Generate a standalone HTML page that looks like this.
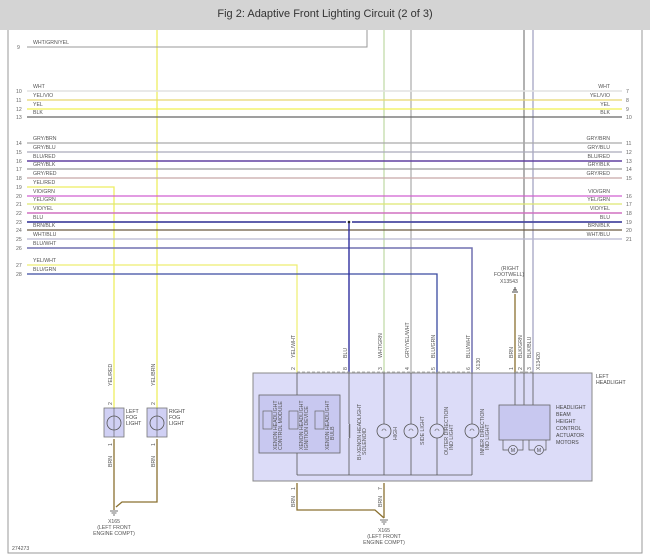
<!DOCTYPE html>
<html><head><meta charset="utf-8"><style>
html,body{margin:0;padding:0;background:#fff;}
svg{display:block;font-family:"Liberation Sans",sans-serif;}
.t{font-size:5.2px;fill:#555;}
.n{font-size:5.2px;fill:#666;}
.l{font-size:5.2px;fill:#444;}
</style></head><body>
<svg width="650" height="559" viewBox="0 0 650 559" xmlns="http://www.w3.org/2000/svg">
<rect width="650" height="559" fill="#fff"/>
<rect x="0" y="0" width="650" height="30" fill="#d4d4d4"/>
<text x="325" y="17" font-size="11" fill="#333" text-anchor="middle">Fig 2: Adaptive Front Lighting Circuit (2 of 3)</text>
<!-- frame -->
<polyline points="8,30 8,553 642,553 642,30" fill="none" stroke="#999" stroke-width="1"/>

<!-- verticals from top -->
<line x1="157" y1="30" x2="157" y2="408" stroke="#eeee60" stroke-width="1.3"/>
<line x1="384" y1="30" x2="384" y2="373" stroke="#b0d090" stroke-width="1"/>
<line x1="411" y1="30" x2="411" y2="373" stroke="#999" stroke-width="1"/>
<line x1="524" y1="30" x2="524" y2="373" stroke="#666" stroke-width="1"/>
<line x1="533" y1="30" x2="533" y2="373" stroke="#8888b0" stroke-width="1"/>

<!-- row 9 -->
<polyline points="27,47 367,47 367,30" fill="none" stroke="#999" stroke-width="1"/>
<text class="t" x="33" y="44">WHT/GRN/YEL</text><text class="n" x="17" y="49">9</text>

<!-- full rows -->
<g stroke-width="1.2" fill="none">
<line x1="27" y1="91" x2="622" y2="91" stroke="#e2e2e2" stroke-width="1.5"/>
<line x1="27" y1="100" x2="622" y2="100" stroke="#e8d870"/>
<line x1="27" y1="109" x2="622" y2="109" stroke="#f0f050"/>
<line x1="27" y1="117" x2="622" y2="117" stroke="#666"/>
<line x1="27" y1="143" x2="622" y2="143" stroke="#aaa"/>
<line x1="27" y1="152" x2="622" y2="152" stroke="#aab"/>
<line x1="27" y1="161" x2="622" y2="161" stroke="#6040a0" stroke-width="1.5"/>
<line x1="27" y1="169" x2="622" y2="169" stroke="#9a9a9a"/>
<line x1="27" y1="178" x2="622" y2="178" stroke="#c8a8a8"/>
<polyline points="27,187 114,187 114,408" stroke="#eeee60" stroke-width="1.3"/>
<line x1="27" y1="196" x2="622" y2="196" stroke="#d060d0"/>
<line x1="27" y1="204" x2="622" y2="204" stroke="#dde870"/>
<line x1="27" y1="213" x2="622" y2="213" stroke="#d070c0" stroke-width="1.4"/>
<line x1="27" y1="222" x2="346" y2="222" stroke="#4a4aa0" stroke-width="1.8"/>
<line x1="352" y1="222" x2="622" y2="222" stroke="#4a4aa0" stroke-width="1.8"/>
<line x1="27" y1="230" x2="622" y2="230" stroke="#6a5a40"/>
<line x1="27" y1="239" x2="622" y2="239" stroke="#b8b8d0"/>
<polyline points="27,248 472,248 472,373" stroke="#7070b0" stroke-width="1.5"/>
<polyline points="27,265 297,265 297,373" stroke="#eeee70"/>
<polyline points="27,274 437,274 437,373" stroke="#3a4aa0" stroke-width="1.3"/>
<line x1="349" y1="222" x2="349" y2="373" stroke="#3030a0" stroke-width="1.4"/>
</g>
<circle cx="349" cy="222" r="1.3" fill="#222"/>

<!-- left labels -->
<g class="t">
<text x="33" y="88">WHT</text><text x="33" y="97">YEL/VIO</text><text x="33" y="106">YEL</text><text x="33" y="114">BLK</text>
<text x="33" y="140">GRY/BRN</text><text x="33" y="149">GRY/BLU</text><text x="33" y="158">BLU/RED</text><text x="33" y="166">GRY/BLK</text><text x="33" y="175">GRY/RED</text><text x="33" y="184">YEL/RED</text><text x="33" y="193">VIO/GRN</text><text x="33" y="201">YEL/GRN</text><text x="33" y="210">VIO/YEL</text><text x="33" y="219">BLU</text><text x="33" y="227">BRN/BLK</text><text x="33" y="236">WHT/BLU</text><text x="33" y="245">BLU/WHT</text><text x="33" y="262">YEL/WHT</text><text x="33" y="271">BLU/GRN</text>
</g>
<g class="n">
<text x="16" y="93">10</text><text x="16" y="102">11</text><text x="16" y="111">12</text><text x="16" y="119">13</text>
<text x="16" y="145">14</text><text x="16" y="154">15</text><text x="16" y="163">16</text><text x="16" y="171">17</text><text x="16" y="180">18</text><text x="16" y="189">19</text><text x="16" y="198">20</text><text x="16" y="206">21</text><text x="16" y="215">22</text><text x="16" y="224">23</text><text x="16" y="232">24</text><text x="16" y="241">25</text><text x="16" y="250">26</text><text x="16" y="267">27</text><text x="16" y="276">28</text>
</g>
<!-- right labels -->
<g class="t" text-anchor="end">
<text x="610" y="88">WHT</text><text x="610" y="97">YEL/VIO</text><text x="610" y="106">YEL</text><text x="610" y="114">BLK</text>
<text x="610" y="140">GRY/BRN</text><text x="610" y="149">GRY/BLU</text><text x="610" y="158">BLU/RED</text><text x="610" y="166">GRY/BLK</text><text x="610" y="175">GRY/RED</text>
<text x="610" y="193">VIO/GRN</text><text x="610" y="201">YEL/GRN</text><text x="610" y="210">VIO/YEL</text><text x="610" y="219">BLU</text><text x="610" y="227">BRN/BLK</text><text x="610" y="236">WHT/BLU</text>
</g>
<g class="n">
<text x="626" y="93">7</text><text x="626" y="102">8</text><text x="626" y="111">9</text><text x="626" y="119">10</text>
<text x="626" y="145">11</text><text x="626" y="154">12</text><text x="626" y="163">13</text><text x="626" y="171">14</text><text x="626" y="180">15</text>
<text x="626" y="198">16</text><text x="626" y="206">17</text><text x="626" y="215">18</text><text x="626" y="224">19</text><text x="626" y="232">20</text><text x="626" y="241">21</text>
</g>

<!-- footwell -->
<g class="t" text-anchor="middle"><text x="510" y="270">(RIGHT</text><text x="509" y="276">FOOTWELL)</text><text x="509" y="283">X13543</text></g>
<path d="M512,292 L518,292 M513,290 L517,290 M515,287 L515,290" stroke="#444" stroke-width="1"/>
<line x1="515" y1="294" x2="515" y2="373" stroke="#8a7030" stroke-width="1.3"/>

<!-- headlight box -->
<rect x="253" y="373" width="339" height="108" fill="#dcdcf8" stroke="#888" stroke-width="1"/>
<line x1="297" y1="372" x2="472" y2="372" stroke="#999" stroke-dasharray="3,2" stroke-width="0.8"/>
<line x1="515" y1="372" x2="533" y2="372" stroke="#999" stroke-dasharray="3,2" stroke-width="0.8"/>
<g class="l"><text x="596" y="378">LEFT</text><text x="596" y="384">HEADLIGHT</text></g>
<!-- vertical labels above pins -->
<g class="t">
<text transform="translate(295,370) rotate(-90)">2</text><text transform="translate(295,358) rotate(-90)">YEL/WHT</text>
<text transform="translate(347,370) rotate(-90)">8</text><text transform="translate(347,358) rotate(-90)">BLU</text>
<text transform="translate(382,370) rotate(-90)">3</text><text transform="translate(382,358) rotate(-90)">WHT/GRN</text>
<text transform="translate(409,370) rotate(-90)">4</text><text transform="translate(409,358) rotate(-90)">GRY/YEL/WHT</text>
<text transform="translate(435,370) rotate(-90)">5</text><text transform="translate(435,358) rotate(-90)">BLU/GRN</text>
<text transform="translate(470,370) rotate(-90)">6</text><text transform="translate(470,358) rotate(-90)">BLU/WHT</text>
<text transform="translate(480,370) rotate(-90)">X130</text>
<text transform="translate(513,370) rotate(-90)">1</text><text transform="translate(513,358) rotate(-90)">BRN</text>
<text transform="translate(522,370) rotate(-90)">2</text><text transform="translate(522,358) rotate(-90)">BLK/GRN</text>
<text transform="translate(531,370) rotate(-90)">3</text><text transform="translate(531,358) rotate(-90)">BLK/BLU</text>
<text transform="translate(540,370) rotate(-90)">X13420</text>
</g>
<!-- internal wires -->
<g stroke="#555" stroke-width="0.8" fill="none">
<line x1="297" y1="373" x2="297" y2="395"/><line x1="297" y1="453" x2="297" y2="475"/>
<line x1="349" y1="373" x2="349" y2="424"/><line x1="349" y1="438" x2="349" y2="475"/>
<line x1="384" y1="373" x2="384" y2="475"/><line x1="411" y1="373" x2="411" y2="475"/>
<line x1="437" y1="373" x2="437" y2="475"/><line x1="472" y1="373" x2="472" y2="475"/>
<line x1="297" y1="475" x2="472" y2="475"/>
<line x1="515" y1="373" x2="515" y2="405"/><line x1="524" y1="373" x2="524" y2="405"/><line x1="533" y1="373" x2="533" y2="405"/>
<path d="M349,424 q2,1 0,2 q2,1 0,2 q2,1 0,2 q2,1 0,2 q2,1 0,2 q2,1 0,2 q2,1 0,2"/>
</g>
<rect x="259" y="395" width="81" height="58" fill="#c8c8f0" stroke="#666" stroke-width="0.8"/>
<rect x="263" y="411" width="9" height="18" fill="none" stroke="#666" stroke-width="0.7"/>
<rect x="289" y="411" width="9" height="18" fill="none" stroke="#666" stroke-width="0.7"/>
<rect x="315" y="411" width="9" height="18" fill="none" stroke="#666" stroke-width="0.7"/>
<g class="t" font-size="4.5">
<text transform="translate(277,450) rotate(-90)">XENON HEADLIGHT</text><text transform="translate(282,450) rotate(-90)">CONTROL MODULE</text>
<text transform="translate(303,450) rotate(-90)">XENON HEADLIGHT</text><text transform="translate(308,450) rotate(-90)">IGNITION DEVICE</text>
<text transform="translate(329,450) rotate(-90)">XENON HEADLIGHT</text><text transform="translate(334,440) rotate(-90)">BULB</text>
<text transform="translate(361,460) rotate(-90)">BI-XENON HEADLIGHT</text><text transform="translate(366,455) rotate(-90)">SOLENOID</text>
<text transform="translate(397,440) rotate(-90)">HIGH</text>
<text transform="translate(424,445) rotate(-90)">SIDE LIGHT</text>
<text transform="translate(448,455) rotate(-90)">OUTER DIRECTION</text><text transform="translate(453,450) rotate(-90)">IND LIGHT</text>
<text transform="translate(484,455) rotate(-90)">INNER DIRECTION</text><text transform="translate(489,450) rotate(-90)">IND LIGHT</text>
</g>
<g fill="#dcdcf8" stroke="#555" stroke-width="0.8">
<circle cx="384" cy="431" r="7"/><circle cx="411" cy="431" r="7"/><circle cx="437" cy="431" r="7"/><circle cx="472" cy="431" r="7"/>
</g>
<g fill="none" stroke="#555" stroke-width="0.6">
<path d="M382,431 a2,2 0 1 1 4,0"/><path d="M409,431 a2,2 0 1 1 4,0"/><path d="M435,431 a2,2 0 1 1 4,0"/><path d="M470,431 a2,2 0 1 1 4,0"/>
</g>
<rect x="499" y="405" width="51" height="35" fill="#c8c8f0" stroke="#666" stroke-width="0.8"/>
<g fill="none" stroke="#555" stroke-width="0.7">
<path d="M503,440 v10 h5 M518,450 h5 v-10"/><path d="M529,440 v10 h5 M544,450 h2 v-10"/>
<circle cx="513" cy="450" r="4.5" fill="#dcdcf8"/><circle cx="539" cy="450" r="4.5" fill="#dcdcf8"/>
</g>
<text x="513" y="452" font-size="5" text-anchor="middle" fill="#444">M</text>
<text x="539" y="452" font-size="5" text-anchor="middle" fill="#444">M</text>
<g class="l"><text x="556" y="409">HEADLIGHT</text><text x="556" y="416">BEAM</text><text x="556" y="423">HEIGHT</text><text x="556" y="430">CONTROL</text><text x="556" y="437">ACTUATOR</text><text x="556" y="444">MOTORS</text></g>

<!-- box bottom ground -->
<polyline points="297,483 297,510 375,510 384,518" fill="none" stroke="#8a7030" stroke-width="1.3"/>
<line x1="384" y1="483" x2="384" y2="518" stroke="#8a7030" stroke-width="1.3"/>
<path d="M380,520 h8 M381.5,522 h5 M383,524 h2" stroke="#444" stroke-width="0.8"/>
<g class="t"><text transform="translate(295,507) rotate(-90)">BRN</text><text transform="translate(295,490) rotate(-90)">1</text>
<text transform="translate(382,507) rotate(-90)">BRN</text><text transform="translate(382,490) rotate(-90)">7</text></g>
<g class="t" text-anchor="middle"><text x="384" y="532">X165</text><text x="384" y="538">(LEFT FRONT</text><text x="384" y="544">ENGINE COMPT)</text></g>

<!-- fog lights -->
<rect x="104" y="408" width="20" height="29" fill="#d0d0f4" stroke="#777" stroke-width="0.8"/>
<rect x="147" y="408" width="20" height="29" fill="#d0d0f4" stroke="#777" stroke-width="0.8"/>
<circle cx="114" cy="423" r="7" fill="#d0d0f4" stroke="#555" stroke-width="0.8"/>
<circle cx="157" cy="423" r="7" fill="#d0d0f4" stroke="#555" stroke-width="0.8"/>
<line x1="114" y1="408" x2="114" y2="437" stroke="#555" stroke-width="0.6"/>
<line x1="157" y1="408" x2="157" y2="437" stroke="#555" stroke-width="0.6"/>
<g class="l"><text x="126" y="413">LEFT</text><text x="126" y="419">FOG</text><text x="126" y="425">LIGHT</text>
<text x="169" y="413">RIGHT</text><text x="169" y="419">FOG</text><text x="169" y="425">LIGHT</text></g>
<g class="t"><text transform="translate(112,386) rotate(-90)">YEL/RED</text><text transform="translate(155,386) rotate(-90)">YEL/BRN</text>
<text transform="translate(112,405) rotate(-90)">2</text><text transform="translate(155,405) rotate(-90)">2</text>
<text transform="translate(112,446) rotate(-90)">1</text><text transform="translate(155,446) rotate(-90)">1</text>
<text transform="translate(112,467) rotate(-90)">BRN</text><text transform="translate(155,467) rotate(-90)">BRN</text></g>
<line x1="114" y1="439" x2="114" y2="510" stroke="#8a7030" stroke-width="1.3"/>
<polyline points="157,439 157,502 122,502 116,507" fill="none" stroke="#8a7030" stroke-width="1.3"/>
<path d="M110,511 h8 M111.5,513 h5 M113,515 h2" stroke="#444" stroke-width="0.8"/>
<g class="t" text-anchor="middle"><text x="114" y="523">X165</text><text x="114" y="529">(LEFT FRONT</text><text x="114" y="535">ENGINE COMPT)</text></g>
<text class="t" x="12" y="550">274273</text>
</svg>
</body></html>
